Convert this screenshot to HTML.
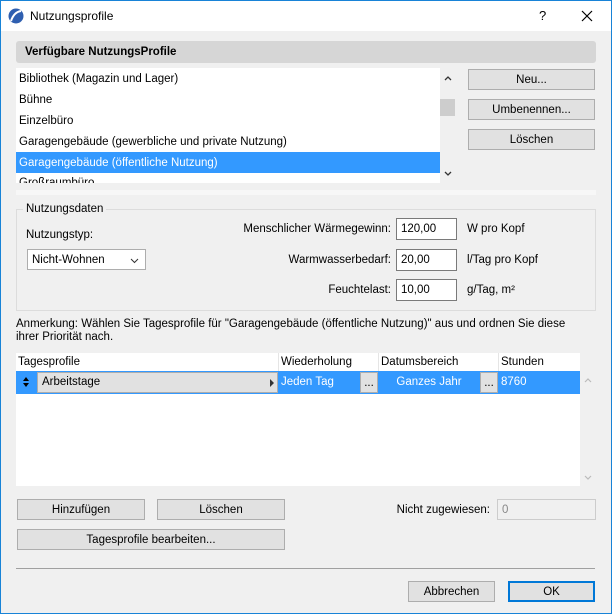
<!DOCTYPE html>
<html><head><meta charset="utf-8"><style>
*{box-sizing:border-box;margin:0;padding:0}
body{width:612px;height:614px;overflow:hidden;background:#f0f0f0;font-family:"Liberation Sans",sans-serif;font-size:11.5px;color:#000;position:relative}
.a{position:absolute;white-space:nowrap}
.btn{position:absolute;background:#e1e1e1;border:1px solid #adadad;text-align:center;display:flex;align-items:center;justify-content:center}
.inp{position:absolute;background:#fff;border:1px solid #7a7a7a;padding-left:4px;display:flex;align-items:center}
.row{position:absolute;left:16px;width:424px;height:21px;padding-left:3px;display:flex;align-items:center}
</style></head><body>
<div class="a" style="left:0;top:0;width:612px;height:31px;background:#fff"></div>
<div class="a" style="left:0;top:0;width:1px;height:614px;background:#1883d7"></div>
<div class="a" style="right:0;top:0;width:1px;height:614px;background:#1883d7"></div>
<div class="a" style="left:0;bottom:0;width:612px;height:1px;background:#1883d7"></div>
<div class="a" style="left:0;top:0;width:612px;height:1px;background:#1883d7"></div>
<svg class="a" style="left:8px;top:8px" width="16" height="16" viewBox="0 0 16 16"><circle cx="8" cy="8" r="7.5" fill="#2f5fb0"/><path d="M3 13 Q6 4 13 3" stroke="#fff" stroke-width="2" fill="none"/></svg>
<div class="a" style="left:30px;top:9px;font-size:12px">Nutzungsprofile</div>
<div class="a" style="left:539px;top:8px;font-size:13px">?</div>
<svg class="a" style="left:581px;top:10px" width="12" height="12"><path d="M1 1L11 11M11 1L1 11" stroke="#000" stroke-width="1.2"/></svg>

<div class="a" style="left:16px;top:41px;width:580px;height:22px;background:#d6d6d6;border-radius:3px"></div>
<div class="a" style="left:25px;top:46px;font-weight:bold">Verfügbare NutzungsProfile</div>
<div class="a" style="left:16px;top:68px;width:424px;height:115px;background:#fff"></div>
<div class="row" style="top:68px">Bibliothek (Magazin und Lager)</div>
<div class="row" style="top:89px">Bühne</div>
<div class="row" style="top:110px">Einzelbüro</div>
<div class="row" style="top:131px">Garagengebäude (gewerbliche und private Nutzung)</div>
<div class="row" style="top:152px;background:#3399ff;color:#fff">Garagengebäude (öffentliche Nutzung)</div>
<div class="a" style="left:16px;top:173px;width:424px;height:10px;overflow:hidden"><div style="padding-left:3px;margin-top:4px">Großraumbüro</div></div>
<div class="a" style="left:16px;top:190px;width:580px;height:5px;background:#f7f7f7"></div>
<svg class="a" style="left:444px;top:75px" width="8" height="6"><path d="M1 5L4 2L7 5" stroke="#333" stroke-width="1.3" fill="none"/></svg>
<div class="a" style="left:440px;top:99px;width:15px;height:17px;background:#cdcdcd"></div>
<svg class="a" style="left:444px;top:171px" width="8" height="6"><path d="M1 1L4 4L7 1" stroke="#333" stroke-width="1.3" fill="none"/></svg>
<div class="btn" style="left:468px;top:69px;width:127px;height:21px">Neu...</div>
<div class="btn" style="left:468px;top:99px;width:127px;height:21px">Umbenennen...</div>
<div class="btn" style="left:468px;top:129px;width:127px;height:21px">Löschen</div>

<div class="a" style="left:16px;top:209px;width:580px;height:102px;border:1px solid #dcdcdc"></div>
<div class="a" style="left:23px;top:203px;background:#f0f0f0;padding:0 3px">Nutzungsdaten</div>
<div class="a" style="left:26px;top:229px">Nutzungstyp:</div>
<div class="inp" style="left:27px;top:249px;width:119px;height:21px;border-color:#adadad">Nicht-Wohnen<svg style="position:absolute;right:6px;top:8px" width="9" height="6"><path d="M1 1L4.5 4.5L8 1" stroke="#333" stroke-width="1" fill="none"/></svg></div>
<div class="a" style="right:221px;top:223px">Menschlicher Wärmegewinn:</div>
<div class="a" style="right:221px;top:254px">Warmwasserbedarf:</div>
<div class="a" style="right:221px;top:284px">Feuchtelast:</div>
<div class="inp" style="left:396px;top:218px;width:61px;height:22px">120,00</div>
<div class="inp" style="left:396px;top:249px;width:61px;height:22px">20,00</div>
<div class="inp" style="left:396px;top:279px;width:61px;height:22px">10,00</div>
<div class="a" style="left:467px;top:223px">W pro Kopf</div>
<div class="a" style="left:467px;top:254px">l/Tag pro Kopf</div>
<div class="a" style="left:467px;top:284px">g/Tag, m²</div>
<div class="a" style="left:16px;top:318px">Anmerkung: Wählen Sie Tagesprofile für "Garagengebäude (öffentliche Nutzung)" aus und ordnen Sie diese</div>
<div class="a" style="left:16px;top:331px">ihrer Priorität nach.</div>

<div class="a" style="left:16px;top:353px;width:564px;height:133px;background:#fff"></div>
<div class="a" style="left:18px;top:356px">Tagesprofile</div>
<div class="a" style="left:278px;top:353px;width:1px;height:18px;background:#e5e5e5"></div>
<div class="a" style="left:378px;top:353px;width:1px;height:18px;background:#e5e5e5"></div>
<div class="a" style="left:498px;top:353px;width:1px;height:18px;background:#e5e5e5"></div>
<div class="a" style="left:281px;top:356px">Wiederholung</div>
<div class="a" style="left:381px;top:356px">Datumsbereich</div>
<div class="a" style="left:501px;top:356px">Stunden</div>
<div class="a" style="left:16px;top:371px;width:564px;height:23px;background:#3399ff"></div>
<svg class="a" style="left:23px;top:377px" width="6" height="10"><path d="M0 4L3 0L6 4ZM0 6L3 10L6 6Z" fill="#000"/></svg>
<div class="a" style="left:37px;top:372px;width:241px;height:21px;background:#e1e1e1;border:1px solid #adadad;padding-left:4px;padding-top:3px">Arbeitstage<svg style="position:absolute;right:3px;top:6px" width="4" height="8"><path d="M0 0L4 4L0 8Z" fill="#333"/></svg></div>
<div class="a" style="left:281px;top:376px;color:#fff">Jeden Tag</div>
<div class="btn" style="left:360px;top:372px;width:18px;height:21px">...</div>
<div class="a" style="left:379px;top:376px;width:100px;text-align:center;color:#fff">Ganzes Jahr</div>
<div class="btn" style="left:480px;top:372px;width:18px;height:21px">...</div>
<div class="a" style="left:501px;top:376px;color:#fff">8760</div>
<svg class="a" style="left:584px;top:377px" width="8" height="6"><path d="M1 5L4 2L7 5" stroke="#bbb" stroke-width="1.2" fill="none"/></svg>
<svg class="a" style="left:584px;top:475px" width="8" height="6"><path d="M1 1L4 4L7 1" stroke="#bbb" stroke-width="1.2" fill="none"/></svg>

<div class="btn" style="left:17px;top:499px;width:128px;height:21px">Hinzufügen</div>
<div class="btn" style="left:157px;top:499px;width:128px;height:21px">Löschen</div>
<div class="btn" style="left:17px;top:529px;width:268px;height:21px">Tagesprofile bearbeiten...</div>
<div class="a" style="right:122px;top:504px">Nicht zugewiesen:</div>
<div class="inp" style="left:497px;top:499px;width:99px;height:21px;background:#f0f0f0;border-color:#ccc;color:#888">0</div>
<div class="a" style="left:16px;top:568px;width:579px;height:1px;background:#a0a0a0"></div>
<div class="btn" style="left:408px;top:581px;width:87px;height:21px">Abbrechen</div>
<div class="btn" style="left:508px;top:581px;width:87px;height:21px;border:2px solid #0078d7">OK</div>
</body></html>
